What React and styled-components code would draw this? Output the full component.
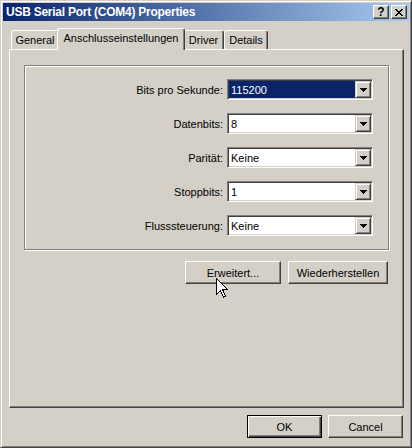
import React from 'react';
import styled, { createGlobalStyle } from 'styled-components';

const Global = createGlobalStyle`
  html, body {
    margin: 0;
    padding: 0;
    background: #d4d0c8;
  }
  * {
    box-sizing: border-box;
  }
`;

const FACE = '#d4d0c8';
const SHADOW = '#808080';
const DARK = '#404040';

const rows = [
  { label: 'Bits pro Sekunde:', value: '115200', selected: true },
  { label: 'Datenbits:', value: '8' },
  { label: 'Parität:', value: 'Keine' },
  { label: 'Stoppbits:', value: '1' },
  { label: 'Flusssteuerung:', value: 'Keine' },
];

const tabs = [
  { name: 'General', width: 48 },
  { name: 'Anschlusseinstellungen', width: 128, active: true },
  { name: 'Driver', width: 41 },
  { name: 'Details', width: 44 },
];

function DropArrow() {
  return (
    <svg width="7" height="4" viewBox="0 0 7 4" shapeRendering="crispEdges">
      <path d="M0 0h7v1H0zM1 1h5v1H1zM2 2h3v1H2zM3 3h1v1H3z" fill="#000" />
    </svg>
  );
}

function CloseGlyph() {
  return (
    <svg width="8" height="7" viewBox="0 0 8 7" shapeRendering="crispEdges">
      <path
        d="M0 0h2v1H0zM6 0h2v1H6zM1 1h2v1H1zM5 1h2v1H5zM2 2h4v1H2zM3 3h2v1H3zM2 4h4v1H2zM1 5h2v1H1zM5 5h2v1H5zM0 6h2v1H0zM6 6h2v1H6z"
        fill="#000"
      />
    </svg>
  );
}

function Pointer() {
  return (
    <CursorSvg width="12" height="20" viewBox="0 0 12 20" shapeRendering="crispEdges">
      <path
        d="M0.5 0.5 L0.5 16.5 L4.5 12.5 L7.5 19 L9.5 18 L6.5 11.5 L11.5 11.5 Z"
        fill="#fff"
        stroke="#000"
        strokeWidth="1"
        strokeLinejoin="miter"
      />
    </CursorSvg>
  );
}

export default function App() {
  return (
    <>
      <Global />
      <Window>
        <TitleBar>
          <Title>USB Serial Port (COM4) Properties</Title>
          <TitleButtons>
            <CaptionButton>?</CaptionButton>
            <CaptionButton>
              <CloseGlyph />
            </CaptionButton>
          </TitleButtons>
        </TitleBar>

        <Body>
          <TabRow>
            {tabs.map((t) => (
              <Tab key={t.name} $active={t.active} $w={t.width}>
                {t.name}
              </Tab>
            ))}
          </TabRow>

          <Panel>
            <GroupBox>
              {rows.map((r) => (
                <React.Fragment key={r.label}>
                  <Label>{r.label}</Label>
                  <Combo>
                    <ComboText $selected={r.selected}>{r.value}</ComboText>
                    <DropButton>
                      <DropArrow />
                    </DropButton>
                  </Combo>
                </React.Fragment>
              ))}
            </GroupBox>

            <PanelButtons>
              <CursorAnchor>
                <PushButton $w={96}>Erweitert...</PushButton>
                <Pointer />
              </CursorAnchor>
              <PushButton $w={100}>Wiederherstellen</PushButton>
            </PanelButtons>
          </Panel>

          <Footer>
            <PushButton $w={75} $default>
              OK
            </PushButton>
            <PushButton $w={75}>Cancel</PushButton>
          </Footer>
        </Body>
      </Window>
    </>
  );
}

const Window = styled.div`
  width: 412px;
  height: 448px;
  background: ${FACE};
  border: 1px solid;
  border-color: ${FACE} ${DARK} ${DARK} ${FACE};
  box-shadow: inset 1px 1px #fff, inset -1px -1px ${SHADOW};
  padding: 2px;
  display: flex;
  flex-direction: column;
  font-family: 'Liberation Sans', Arial, sans-serif;
  font-size: 11px;
  color: #000;
`;

const TitleBar = styled.div`
  height: 18px;
  flex: none;
  display: flex;
  align-items: center;
  justify-content: space-between;
  padding: 0 2px;
  background: linear-gradient(to right, #0a246a, #a6caf0);
`;

const Title = styled.div`
  color: #fff;
  font-weight: bold;
  font-size: 12px;
  letter-spacing: -0.25px;
  padding-left: 1px;
  white-space: nowrap;
`;

const TitleButtons = styled.div`
  display: flex;
  gap: 2px;
`;

const CaptionButton = styled.div`
  width: 16px;
  height: 14px;
  display: flex;
  align-items: center;
  justify-content: center;
  background: ${FACE};
  border: 1px solid;
  border-color: #fff ${DARK} ${DARK} #fff;
  box-shadow: inset -1px -1px ${SHADOW};
  font-weight: bold;
  font-size: 12px;
  line-height: 1;
`;

const Body = styled.div`
  flex: 1;
  display: flex;
  flex-direction: column;
  padding: 7px 5px 0 6px;
`;

const TabRow = styled.div`
  height: 21px;
  flex: none;
  display: flex;
  align-items: flex-end;
  padding-left: 2px;
  position: relative;
  z-index: 1;
`;

const Tab = styled.div`
  width: ${(p) => p.$w}px;
  height: ${(p) => (p.$active ? '22px' : '19px')};
  margin: ${(p) => (p.$active ? '0 -2px -1px' : '0')};
  background: ${FACE};
  border: 1px solid;
  border-bottom: none;
  border-color: #fff ${DARK} transparent #fff;
  border-radius: 3px 3px 0 0;
  box-shadow: inset -1px 0 ${SHADOW};
  display: flex;
  justify-content: center;
  padding-top: 3px;
  white-space: nowrap;
  position: relative;
  z-index: ${(p) => (p.$active ? 2 : 1)};
`;

const Panel = styled.div`
  height: 359px;
  flex: none;
  border: 1px solid;
  border-color: #fff ${DARK} ${DARK} #fff;
  box-shadow: inset -1px -1px ${SHADOW};
  padding: 15px 14px 0 14px;
  display: flex;
  flex-direction: column;
`;

const GroupBox = styled.div`
  border: 1px solid ${SHADOW};
  box-shadow: inset 1px 1px #fff, 1px 1px #fff;
  padding: 13px 15px 13px 0;
  display: grid;
  grid-template-columns: 1fr 146px;
  grid-auto-rows: 21px;
  column-gap: 4px;
  row-gap: 13px;
`;

const Label = styled.div`
  text-align: right;
  align-self: center;
  white-space: nowrap;
`;

const Combo = styled.div`
  display: flex;
  background: #fff;
  border: 1px solid;
  border-color: ${SHADOW} #fff #fff ${SHADOW};
  box-shadow: inset 1px 1px ${DARK}, inset -1px -1px ${FACE};
  padding: 1px;
`;

const ComboText = styled.div`
  flex: 1;
  display: flex;
  align-items: center;
  padding-left: 2px;
  background: ${(p) => (p.$selected ? '#0a246a' : '#fff')};
  color: ${(p) => (p.$selected ? '#fff' : '#000')};
`;

const DropButton = styled.div`
  width: 16px;
  flex: none;
  display: flex;
  align-items: center;
  justify-content: center;
  background: ${FACE};
  border: 1px solid;
  border-color: ${FACE} ${DARK} ${DARK} ${FACE};
  box-shadow: inset 1px 1px #fff, inset -1px -1px ${SHADOW};
`;

const PanelButtons = styled.div`
  display: flex;
  justify-content: flex-end;
  gap: 7px;
  margin-top: 11px;
  padding-right: 1px;
`;

const CursorAnchor = styled.div`
  position: relative;
  display: flex;
`;

const CursorSvg = styled.svg`
  position: absolute;
  left: 31px;
  top: 17px;
  pointer-events: none;
`;

const PushButton = styled.div`
  width: ${(p) => p.$w}px;
  height: 23px;
  display: flex;
  align-items: center;
  justify-content: center;
  background: ${FACE};
  border: 1px solid;
  border-color: ${(p) => (p.$default ? '#000' : `#fff ${DARK} ${DARK} #fff`)};
  box-shadow: ${(p) =>
    p.$default
      ? `inset 1px 1px #fff, inset -1px -1px ${DARK}, inset -2px -2px ${SHADOW}`
      : `inset -1px -1px ${SHADOW}`};
  white-space: nowrap;
`;

const Footer = styled.div`
  display: flex;
  justify-content: flex-end;
  gap: 6px;
  margin-top: 7px;
  padding-right: 1px;
`;
